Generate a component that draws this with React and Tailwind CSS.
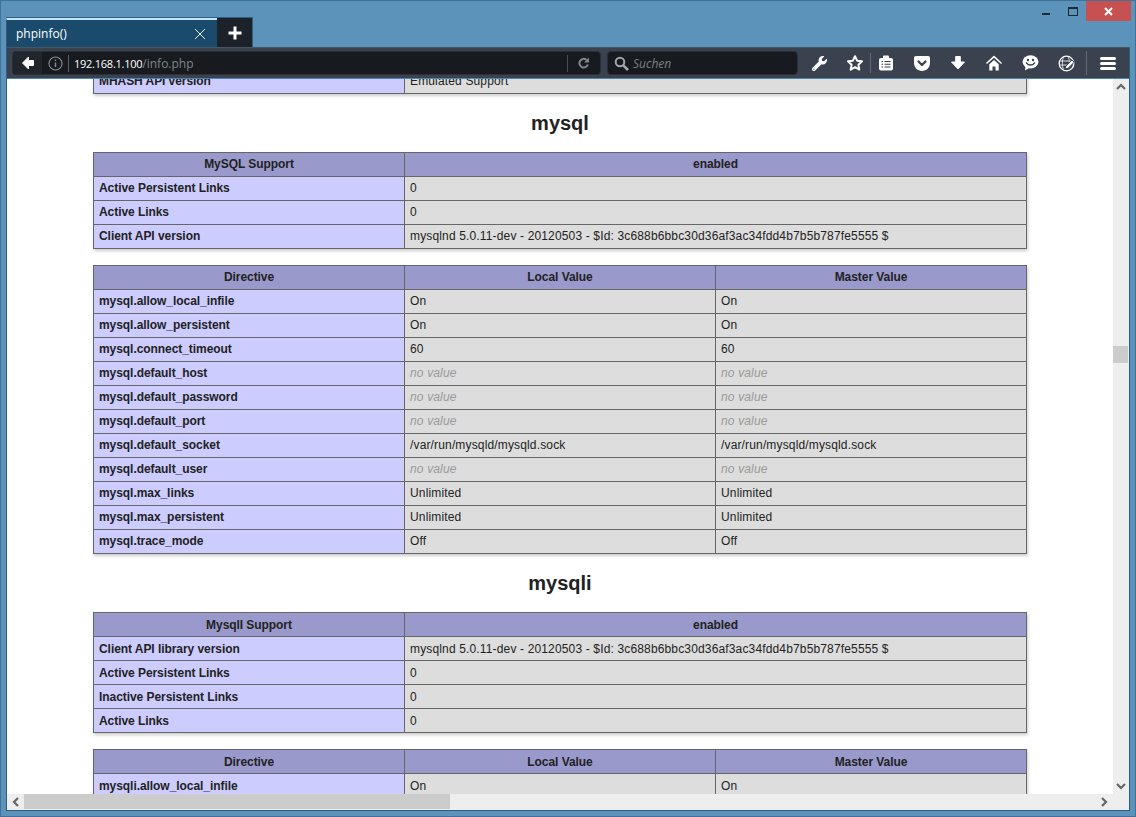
import { FaWrench } from 'react-icons/fa';

const NO = 'no value';

const mysqlDirectives = [
  ['mysql.allow_local_infile', 'On', 'On'],
  ['mysql.allow_persistent', 'On', 'On'],
  ['mysql.connect_timeout', '60', '60'],
  ['mysql.default_host', NO, NO],
  ['mysql.default_password', NO, NO],
  ['mysql.default_port', NO, NO],
  ['mysql.default_socket', '/var/run/mysqld/mysqld.sock', '/var/run/mysqld/mysqld.sock'],
  ['mysql.default_user', NO, NO],
  ['mysql.max_links', 'Unlimited', 'Unlimited'],
  ['mysql.max_persistent', 'Unlimited', 'Unlimited'],
  ['mysql.trace_mode', 'Off', 'Off'],
];

const clientVersion = 'mysqlnd 5.0.11-dev - 20120503 - $Id: 3c688b6bbc30d36af3ac34fdd4b7b5b787fe5555 $';

// low: text sits 1px further down in the mysqli tables
function PhpTable({ head, rows, threeCol, low }) {
  const pad = low ? 'pt-0 pb-0' : 'pt-0 pb-[2px]';
  return (
    <table className="w-[933px] table-fixed border-collapse shadow-[1px_2px_3px_#ccc]">
      <colgroup>
        <col className="w-[311px]" />
        <col className={threeCol ? 'w-[311px]' : 'w-[622px]'} />
        {threeCol && <col className="w-[311px]" />}
      </colgroup>
      <tbody>
        {head && (
          <tr className="h-6">
            {head.map((h) => (
              <th key={h} className={`border border-[#666] bg-[#99c] px-[5px] ${pad} text-center font-bold tracking-[-0.06px]`}>{h}</th>
            ))}
          </tr>
        )}
        {rows.map((r) => (
          <tr key={r[0]} className="h-6">
            <td className={`border border-[#666] bg-[#ccf] px-[5px] ${pad} font-bold tracking-[-0.06px]`}>{r[0]}</td>
            {r.slice(1).map((v, i) => (
              <td key={i} className={`border border-[#666] bg-[#ddd] px-[5px] ${pad} tracking-[0.15px]`}>
                {v === NO ? <i className="text-[#999]">{v}</i> : v}
              </td>
            ))}
          </tr>
        ))}
      </tbody>
    </table>
  );
}

function Heading({ children }) {
  return <h2 className="flex h-[58px] w-[934px] items-center justify-center text-[20px] font-bold">{children}</h2>;
}

function Star() {
  return (
    <svg width="18" height="18" viewBox="0 0 18 18">
      <path d="M9 2.2l2.1 4.5 4.9.6-3.6 3.4.9 4.9L9 13.2l-4.3 2.4.9-4.9L2 7.3l4.9-.6z" fill="none" stroke="#fff" strokeWidth="2" strokeLinejoin="round" />
    </svg>
  );
}

function Clipboard() {
  return (
    <svg width="16" height="16" viewBox="0 0 16 16">
      <rect x="1" y="3" width="14" height="12.5" rx="2" fill="#fff" />
      <rect x="5" y="0.5" width="6" height="4" rx="1" fill="#fff" />
      <path d="M3.5 6.5h1.5M6.5 6.5h6M3.5 9.2h1.5M6.5 9.2h6M3.5 12h1.5M6.5 12h6" stroke="#39424e" strokeWidth="1.1" />
    </svg>
  );
}

function Pocket() {
  return (
    <svg width="16" height="15" viewBox="0 0 16 15">
      <path d="M2 0h12a2 2 0 0 1 2 2v5c0 4.4-3.6 8-8 8s-8-3.6-8-8V2a2 2 0 0 1 2-2z" fill="#fff" />
      <path d="M4.5 5.5L8 9l3.500-3.500" fill="none" stroke="#39424e" strokeWidth="2.300" strokeLinecap="round" strokeLinejoin="round" />
    </svg>
  );
}

function Download() {
  return (
    <svg width="16" height="16" viewBox="0 0 16 16">
      <path d="M5.700 1.500h4.600v5.500h4.200L8 14 1.500 7h4.200z" fill="#fff" stroke="#fff" strokeWidth="1" strokeLinejoin="round" />
    </svg>
  );
}

function Home() {
  return (
    <svg width="16" height="16" viewBox="0 0 16 16">
      <path d="M1 8l7-6.300L15 8" fill="none" stroke="#fff" strokeWidth="1.600" strokeLinecap="round" strokeLinejoin="round" />
      <path d="M3.300 9.200L8 5l4.700 4.200V15.500H9.500v-4h-3v4H3.300z" fill="#fff" />
    </svg>
  );
}

function Smile() {
  return (
    <svg width="17" height="16" viewBox="0 0 17 16">
      <ellipse cx="8.500" cy="6.800" rx="8" ry="6.600" fill="#fff" />
      <path d="M3.500 11l-.5 4.500 5-3z" fill="#fff" />
      <circle cx="6" cy="5" r="1.200" fill="#39424e" />
      <circle cx="11" cy="5" r="1.200" fill="#39424e" />
      <path d="M4.500 7.800c1.800 3 6.200 3 8 0" fill="none" stroke="#39424e" strokeWidth="1.500" strokeLinecap="round" />
    </svg>
  );
}

function GlobePen() {
  return (
    <svg width="17" height="17" viewBox="0 0 17 17">
      <circle cx="8.500" cy="8.500" r="7.300" fill="none" stroke="#fff" strokeWidth="1.300" />
      <path d="M1.500 6h13M1.500 10h10M5.500 1.500c-1.500 4-1.500 9 0 14M10 1.500c1 1.800 1.300 3.500 1.300 6" fill="none" stroke="#d8dadd" strokeWidth="1" />
      <path d="M7 14l1-3 6-6 2.200 2.200-6 6z" fill="#fff" stroke="#39424e" strokeWidth="1" strokeLinejoin="round" />
    </svg>
  );
}

function Chevron({ d }) {
  return (
    <svg width="10" height="10" viewBox="0 0 10 10">
      <path d={d} fill="none" stroke="#666" strokeWidth="2.200" />
    </svg>
  );
}

export default function App() {
  return (
    <div className="flex h-[817px] w-[1136px] flex-col overflow-hidden border border-[#3f7296] bg-[#5b93bb] px-[5px] pb-[5px] font-['Liberation_Sans',Arial,sans-serif] text-[12px] text-[#222]">
      {/* title bar */}
      <div className="flex h-[46px] shrink-0 items-start">
        <div className="mt-4 flex h-[30px] border-t border-[#2f5f80]">
          <div className="flex w-[211px] items-center border-t-2 border-l border-[#c5e4f5] border-l-[#2f5f80] bg-[#1a4a6c] pl-[9px] pr-[11px] font-['Open_Sans',sans-serif] text-white">
            <span>phpinfo()</span>
            <svg className="ml-auto" width="12" height="12" viewBox="0 0 12 12">
              <path d="M1 1l10 10M11 1L1 11" stroke="#e4ecf1" strokeWidth="1" />
            </svg>
          </div>
          <div className="flex w-[36px] items-center justify-center border-r border-[#2f5f80] bg-[#1c2229]">
            <svg width="14" height="14" viewBox="0 0 14 14">
              <path d="M7 0.500v13M0.500 7h13" stroke="#fff" strokeWidth="3" />
            </svg>
          </div>
        </div>
        <div className="-mr-px ml-auto flex items-start">
          <div className="mt-3 h-[2px] w-2 bg-[#1f2a33]" />
          <div className="ml-[18px] mt-[6px] h-[9px] w-[10px] border border-t-2 border-[#1f2a33]" />
          <div className="ml-2 flex h-5 w-[45px] items-center justify-center bg-[#c75050]">
            <svg width="9" height="9" viewBox="0 0 9 9">
              <path d="M1 1l7 7M8 1L1 8" stroke="#fff" strokeWidth="2" />
            </svg>
          </div>
        </div>
      </div>

      {/* browser frame */}
      <div className="flex min-h-0 flex-1 flex-col border-x border-b border-[#2f5f80]">
        <div className="flex h-[32px] shrink-0 items-center border-t border-b border-t-[#4a5562] border-b-[#4d86ab] bg-[#39424e]">
          <div className="ml-[5px] flex h-6 w-[589px] items-center rounded-sm border border-[#2b3038] bg-[#171b1f]">
            <div className="flex h-full w-[29px] items-center justify-center bg-[#21262c]">
              <svg width="14" height="14" viewBox="0 0 14 14">
                <path d="M7.500 1L1.500 7l6 6V9.500h5v-5h-5z" fill="#fff" stroke="#fff" strokeWidth="1" strokeLinejoin="round" />
              </svg>
            </div>
            <svg className="ml-[6px]" width="15" height="15" viewBox="0 0 15 15">
              <circle cx="7.500" cy="7.500" r="6.500" fill="none" stroke="#8a8e93" strokeWidth="1.100" />
              <path d="M7.500 6.500v4.500M7.500 3.500v1.600" stroke="#8a8e93" strokeWidth="1.400" />
            </svg>
            <div className="ml-[5px] h-[17px] w-px bg-[#5a6068]" />
            <div className="ml-[5px] mt-px flex items-baseline font-['Open_Sans',sans-serif]">
              <span className="text-[11px] tracking-[-0.25px] text-white">192.168.1.100</span>
              <span className="text-[12px] text-[#808489]">/info.php</span>
            </div>
            <div className="ml-auto mr-[10px] h-[17px] w-px bg-[#4a4f56]" />
            <svg className="mr-[10px]" width="12" height="12" viewBox="0 0 12 12">
              <path d="M9.800 7.500A4.300 4.300 0 1 1 8.500 2.900" fill="none" stroke="#82878c" strokeWidth="2" />
              <path d="M11 0.500V5.500H6z" fill="#82878c" />
            </svg>
          </div>

          <div className="ml-[6px] flex h-6 w-[191px] items-center rounded-sm border border-[#2b3038] bg-[#171b1f] pl-[6px]">
            <svg width="15" height="15" viewBox="0 0 15 15">
              <circle cx="6" cy="6" r="4.300" fill="none" stroke="#a2a6aa" strokeWidth="2" />
              <path d="M9.300 9.300l4.700 4.700" stroke="#a2a6aa" strokeWidth="2.600" />
            </svg>
            <span className="ml-[4px] mt-px font-['Open_Sans',sans-serif] text-[12px] italic text-[#7b7f84]">Suchen</span>
          </div>

          <div className="ml-[3px] flex h-full items-center">
            <div className="flex w-9 items-center justify-center"><FaWrench className="size-[15px] text-white" /></div>
            <div className="flex w-9 items-center justify-center"><Star /></div>
            <div className="-ml-[3px] h-[20px] w-px bg-[#5f6873]" />
            <div className="-ml-[3px] flex w-9 items-center justify-center"><Clipboard /></div>
            <div className="flex w-9 items-center justify-center"><Pocket /></div>
            <div className="flex w-9 items-center justify-center"><Download /></div>
            <div className="flex w-9 items-center justify-center"><Home /></div>
            <div className="flex w-9 items-center justify-center"><Smile /></div>
            <div className="flex w-9 items-center justify-center"><GlobePen /></div>
            <div className="ml-[2px] h-[24px] w-px bg-[#5f6873]" />
            <div className="ml-[3px] flex w-9 flex-col items-center gap-[2px]">
              <div className="h-[3px] w-4 rounded-sm bg-white" />
              <div className="h-[3px] w-4 rounded-sm bg-white" />
              <div className="h-[3px] w-4 rounded-sm bg-white" />
            </div>
          </div>
        </div>

        {/* page + vertical scrollbar */}
        <div className="flex min-h-0 flex-1">
          <div className="min-w-0 flex-1 overflow-hidden bg-white pl-[86px]">
            <div className="-mt-[10px] w-[934px]">
              <PhpTable rows={[['MHASH API version', 'Emulated Support']]} />
              <Heading>mysql</Heading>
              <PhpTable
                head={['MySQL Support', 'enabled']}
                rows={[
                  ['Active Persistent Links', '0'],
                  ['Active Links', '0'],
                  ['Client API version', clientVersion],
                ]}
              />
              <div className="h-4" />
              <PhpTable threeCol head={['Directive', 'Local Value', 'Master Value']} rows={mysqlDirectives} />
              <Heading>mysqli</Heading>
              <PhpTable
                low
                head={['MysqlI Support', 'enabled']}
                rows={[
                  ['Client API library version', clientVersion],
                  ['Active Persistent Links', '0'],
                  ['Inactive Persistent Links', '0'],
                  ['Active Links', '0'],
                ]}
              />
              <div className="h-4" />
              <PhpTable low threeCol head={['Directive', 'Local Value', 'Master Value']} rows={[['mysqli.allow_local_infile', 'On', 'On']]} />
            </div>
          </div>
          <div className="flex w-4 shrink-0 flex-col items-start bg-[#eee]">
            <div className="flex h-4 w-[15px] items-center justify-center"><Chevron d="M1 7l4-4 4 4" /></div>
            <div className="mt-[251px] h-[17px] w-[15px] bg-[#ccc]" />
            <div className="mt-auto flex h-4 w-[15px] items-center justify-center"><Chevron d="M1 3l4 4 4-4" /></div>
          </div>
        </div>

        {/* horizontal scrollbar */}
        <div className="flex h-4 shrink-0 bg-[#eee]">
          <div className="flex w-[17px] items-center justify-center"><Chevron d="M7 1L3 5l4 4" /></div>
          <div className="h-[15px] w-[426px] bg-[#ccc]" />
          <div className="ml-auto mr-[17px] flex w-4 items-center justify-center"><Chevron d="M3 1l4 4-4 4" /></div>
        </div>
      </div>
    </div>
  );
}
